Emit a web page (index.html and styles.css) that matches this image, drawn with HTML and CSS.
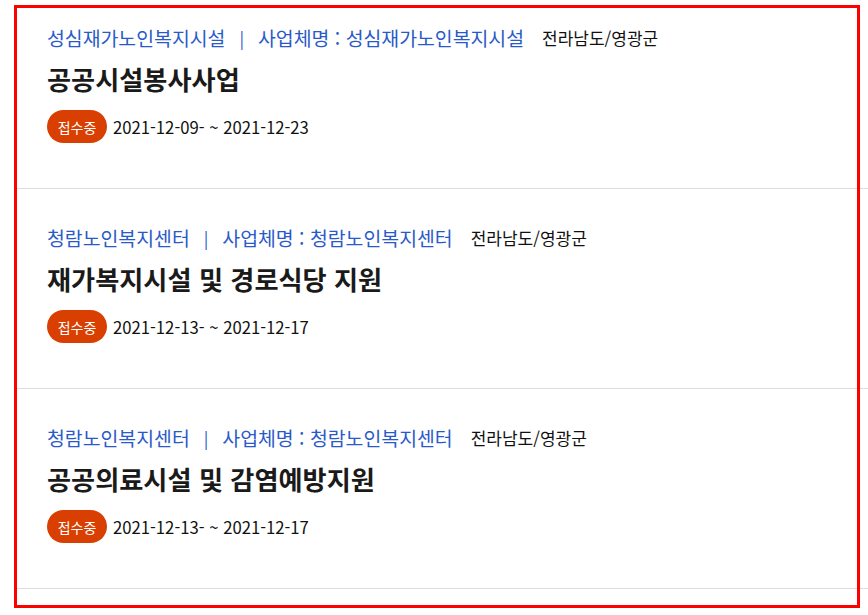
FILE: index.html
```html
<!DOCTYPE html>
<html lang="ko">
<head>
<meta charset="utf-8">
<link rel="stylesheet" href="styles.css">
</head>
<body>
<ul class="list">
  <li class="item">
    <div class="meta">
      <span class="org">성심재가노인복지시설</span>
      <span class="sep">|</span>
      <span class="org">사업체명 : 성심재가노인복지시설</span>
      <span class="region">전라남도/영광군</span>
    </div>
    <h2 class="title">공공시설봉사사업</h2>
    <div class="status">
      <span class="badge">접수중</span>
      <span class="date">2021-12-09- ~ 2021-12-23</span>
    </div>
  </li>
  <li class="item">
    <div class="meta">
      <span class="org">청람노인복지센터</span>
      <span class="sep">|</span>
      <span class="org">사업체명 : 청람노인복지센터</span>
      <span class="region">전라남도/영광군</span>
    </div>
    <h2 class="title">재가복지시설 및 경로식당 지원</h2>
    <div class="status">
      <span class="badge">접수중</span>
      <span class="date">2021-12-13- ~ 2021-12-17</span>
    </div>
  </li>
  <li class="item">
    <div class="meta">
      <span class="org">청람노인복지센터</span>
      <span class="sep">|</span>
      <span class="org">사업체명 : 청람노인복지센터</span>
      <span class="region">전라남도/영광군</span>
    </div>
    <h2 class="title">공공의료시설 및 감염예방지원</h2>
    <div class="status">
      <span class="badge">접수중</span>
      <span class="date">2021-12-13- ~ 2021-12-17</span>
    </div>
  </li>
</ul>
<div class="highlight"></div>
</body>
</html>
```

FILE: styles.css
```css
html, body {
  margin: 0;
  padding: 0;
  background: #ffffff;
  overflow: hidden;
}
body {
  font-family: "Noto Sans CJK KR", "Noto Sans", sans-serif;
  color: #111111;
}
.list {
  list-style: none;
  margin: -11px 0 0 16px;
  padding: 0;
}
.item {
  padding: 35px 0 45px 31px;
  border-bottom: 1px solid #dddddd;
}
.meta {
  display: flex;
  align-items: center;
  height: 26px;
  white-space: nowrap;
}
.org {
  font-size: 19.4px;
  font-weight: 400;
  color: #2a5ac8;
}
.sep {
  font-size: 17px;
  font-weight: 400;
  color: #2a5ac8;
  margin: 0 14px;
}
.region {
  font-size: 17px;
  font-weight: 400;
  color: #111111;
  margin-left: 18px;
}
.title {
  margin: 12px 0 0 0;
  height: 34px;
  line-height: 34px;
  font-size: 26.2px;
  font-weight: 700;
  color: #1a1a1a;
  white-space: nowrap;
}
.status {
  display: flex;
  align-items: center;
  margin-top: 14px;
  height: 33px;
}
.badge {
  display: inline-flex;
  align-items: center;
  justify-content: center;
  width: 60px;
  height: 33px;
  border-radius: 16.5px;
  background: #d93f00;
  color: #ffffff;
  font-size: 14px;
}
.date {
  margin-left: 6px;
  font-size: 16.7px;
  color: #111111;
  white-space: nowrap;
}
.highlight {
  position: absolute;
  left: 14px;
  top: 5px;
  width: 846px;
  height: 603px;
  box-sizing: border-box;
  border: 3px solid #ff0000;
  pointer-events: none;
}
```
